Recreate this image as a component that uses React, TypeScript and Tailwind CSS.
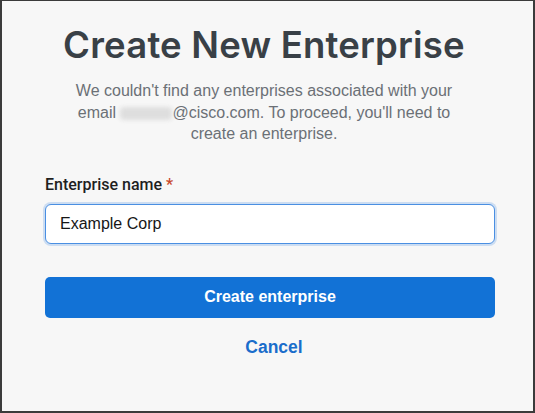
import React, { useState } from "react";

export default function App() {
    const [name, setName] = useState("Example Corp");

    return (
        <div className="w-[535px] h-[413px] bg-[#f7f7f7] border-x-2 border-b-2 border-t border-[#3b3b3b] flex flex-col pl-[43px] pr-[38px] pt-[22px] font-['Liberation_Sans',Arial,sans-serif]">
            {/* Heading */}
            <div className="pr-[12px]">
                <h1 className="text-center text-[36.5px] leading-[44px] font-semibold text-[#394046] font-['Inter',sans-serif] tracking-[0.2px]">
                    Create New Enterprise
                </h1>
                <p className="mt-[13px] text-center text-[16px] leading-[21.5px] text-[#6b7076]">
                    We couldn't find any enterprises associated with your
                    <br />
                    email{" "}
                    <span className="inline-block align-middle w-[52px] h-[13px] bg-[#dedede] blur-[2px] rounded-sm"></span>
                    @cisco.com. To proceed, you'll need to
                    <br />
                    create an enterprise.
                </p>
            </div>

            {/* Form */}
            <label className="mt-[30px] text-[16px] leading-[20px] text-[#1f1f1f] font-medium font-['Roboto',sans-serif]">
                Enterprise name <span className="text-[#c8482c]">*</span>
            </label>
            <input
                type="text"
                value={name}
                onChange={(e) => setName(e.target.value)}
                className="mt-[9px] h-[40px] w-full rounded-[6px] border-[1.5px] border-[#4a8fe2] bg-white px-[14px] text-[16px] text-[#161616] shadow-[0_0_0_2px_rgba(74,143,226,0.25)] outline-none"
            />

            <button className="mt-[33px] h-[41px] w-full rounded-[5px] bg-[#1272d6] text-white text-[16px] font-bold">
                Create enterprise
            </button>
            <button className="mt-[19px] self-center pl-[8px] text-[17.5px] leading-[21px] font-bold text-[#1a6dcb]">
                Cancel
            </button>
        </div>
    );
}
